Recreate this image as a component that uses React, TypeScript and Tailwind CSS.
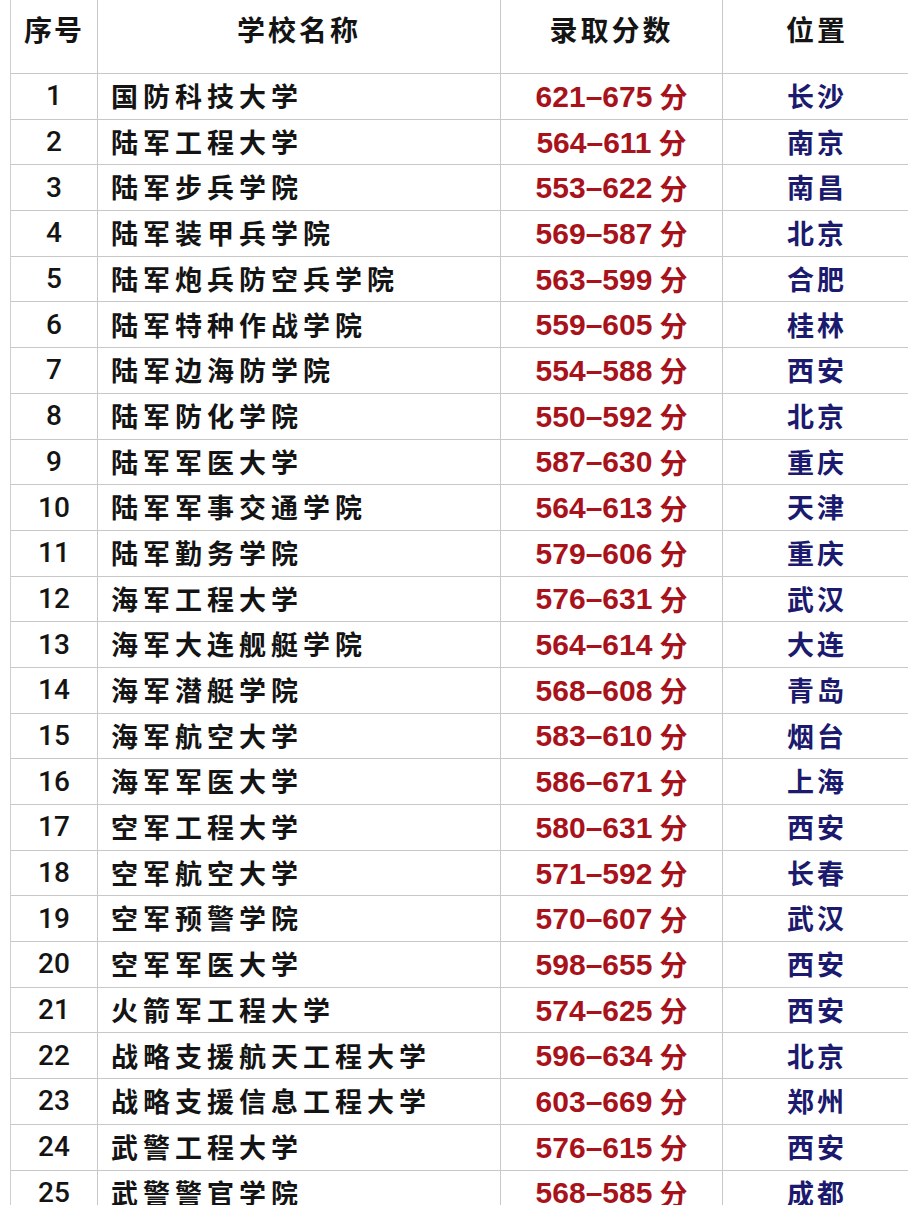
const rows: [string, string, string][] = [
  ["国防科技大学", "621–675", "长沙"],
  ["陆军工程大学", "564–611", "南京"],
  ["陆军步兵学院", "553–622", "南昌"],
  ["陆军装甲兵学院", "569–587", "北京"],
  ["陆军炮兵防空兵学院", "563–599", "合肥"],
  ["陆军特种作战学院", "559–605", "桂林"],
  ["陆军边海防学院", "554–588", "西安"],
  ["陆军防化学院", "550–592", "北京"],
  ["陆军军医大学", "587–630", "重庆"],
  ["陆军军事交通学院", "564–613", "天津"],
  ["陆军勤务学院", "579–606", "重庆"],
  ["海军工程大学", "576–631", "武汉"],
  ["海军大连舰艇学院", "564–614", "大连"],
  ["海军潜艇学院", "568–608", "青岛"],
  ["海军航空大学", "583–610", "烟台"],
  ["海军军医大学", "586–671", "上海"],
  ["空军工程大学", "580–631", "西安"],
  ["空军航空大学", "571–592", "长春"],
  ["空军预警学院", "570–607", "武汉"],
  ["空军军医大学", "598–655", "西安"],
  ["火箭军工程大学", "574–625", "西安"],
  ["战略支援航天工程大学", "596–634", "北京"],
  ["战略支援信息工程大学", "603–669", "郑州"],
  ["武警工程大学", "576–615", "西安"],
  ["武警警官学院", "568–585", "成都"],
];

const cjk = "font-['Noto_Sans_CJK_SC',sans-serif]";

export default function App() {
  return (
    <div className="h-[1205px] w-[908px] overflow-hidden bg-white">
      <div className="ml-[10px] grid grid-cols-[87px_403px_222px_188px] border-l border-[#cfcfcf] text-[#141414]">
        {/* header */}
        <div className={`flex h-[74px] justify-center border-r border-b border-[#c8c8c8] pt-[8px] text-[28px] font-semibold tracking-[2px] ${cjk}`}>
          序号
        </div>
        <div className={`flex h-[74px] justify-center border-r border-b border-[#c8c8c8] pt-[8px] text-[28px] font-semibold tracking-[3px] ${cjk}`}>
          学校名称
        </div>
        <div className={`flex h-[74px] justify-center border-r border-b border-[#c8c8c8] pt-[8px] text-[28px] font-semibold tracking-[3px] ${cjk}`}>
          录取分数
        </div>
        <div className={`flex h-[74px] justify-center border-b border-[#c8c8c8] pt-[8px] text-[28px] font-semibold tracking-[3px] ${cjk}`}>
          位置
        </div>

        {rows.map(([name, score, city], i) => (
          <div key={name + i} className="contents">
            <div className="flex h-[45.7px] items-center justify-center border-r border-b border-[#c8c8c8] font-['Roboto',sans-serif] text-[28px] font-medium">
              {i + 1}
            </div>
            <div className={`flex h-[45.7px] items-center border-r border-b border-[#c8c8c8] pl-[13px] text-[27px] font-semibold tracking-[5px] ${cjk}`}>
              {name}
            </div>
            <div className="flex h-[45.7px] items-center justify-center border-r border-b border-[#c8c8c8] text-[#a8121b]">
              <span className="font-['Liberation_Sans',sans-serif] text-[30px] font-bold">{score}</span>
              <span className={`ml-[7px] text-[28px] font-semibold ${cjk}`}>分</span>
            </div>
            <div className={`flex h-[45.7px] items-center justify-center border-b border-[#c8c8c8] text-[27px] font-semibold tracking-[3px] text-[#1b1a6e] ${cjk}`}>
              {city}
            </div>
          </div>
        ))}
      </div>
    </div>
  );
}
